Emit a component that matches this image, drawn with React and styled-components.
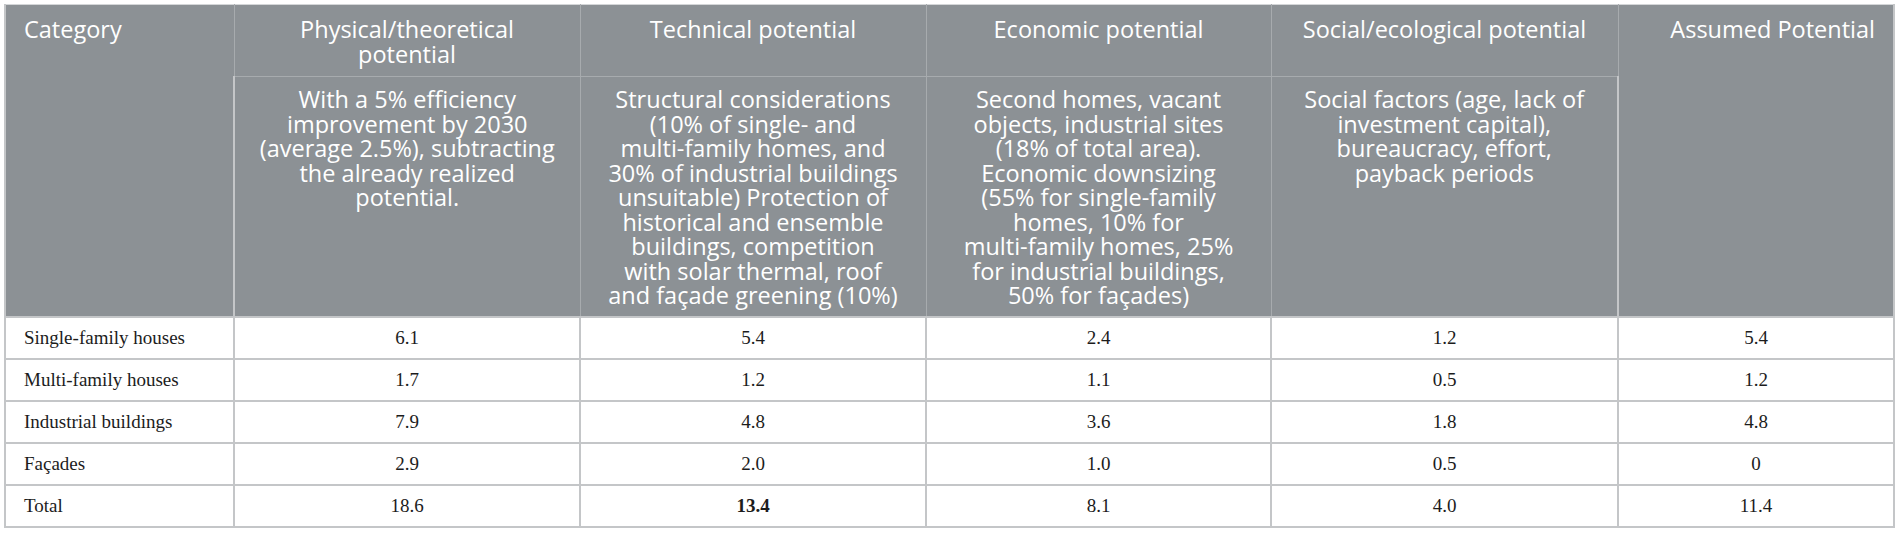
import React from "react";
import styled, { createGlobalStyle } from "styled-components";

const Global = createGlobalStyle`
  html, body { margin: 0; padding: 0; background: #ffffff; }
  body { font-family: "Liberation Serif", serif; }
`;

const Page = styled.div`
  padding: 4px 0 0 4px;
`;

const Table = styled.table`
  width: 1889px;
  table-layout: fixed;
  border-collapse: collapse;
  border-top: 1px solid #d4d6d8;
`;

const HeadCell = styled.th`
  background: #8c9195;
  color: #ffffff;
  font-family: "Open Sans", "Noto Sans", sans-serif;
  font-weight: 400;
  font-size: 23.5px;
  line-height: 24.5px;
  vertical-align: top;
  text-align: ${(p) => p.$align || "center"};
  padding: ${(p) => (p.$sub ? "10px 10px 8px" : "12px 18px 10px")};
  border-left: 1px solid #a7abae;
  border-right: 1px solid #a7abae;
  border-top: ${(p) => (p.$sub ? "1px solid #a7abae" : "none")};
  white-space: pre;
  &:first-child { border-left: 2px solid #c4c6c8; }
  &:last-child { border-right: 2px solid #c4c6c8; }
`;

const BodyCell = styled.td`
  height: 40px;
  padding: 0 18px;
  font-family: "Liberation Serif", "Times New Roman", serif;
  font-size: 19px;
  color: #1c1c1c;
  font-weight: ${(p) => (p.$bold ? 700 : 400)};
  text-align: ${(p) => (p.$left ? "left" : "center")};
  vertical-align: middle;
  border: 2px solid #c4c6c8;
  white-space: nowrap;
`;

const BodyRow = styled.tr``;

const columns = [229, 346, 346, 345, 347, 276];

const topHeads = [
  ["Physical/theoretical", "potential"],
  ["Technical potential"],
  ["Economic potential"],
  ["Social/ecological potential"],
];

const subHeads = [
  [
    "With a 5% efficiency",
    "improvement by 2030",
    "(average 2.5%), subtracting",
    "the already realized",
    "potential.",
  ],
  [
    "Structural considerations",
    "(10% of single- and",
    "multi-family homes, and",
    "30% of industrial buildings",
    "unsuitable) Protection of",
    "historical and ensemble",
    "buildings, competition",
    "with solar thermal, roof",
    "and façade greening (10%)",
  ],
  [
    "Second homes, vacant",
    "objects, industrial sites",
    "(18% of total area).",
    "Economic downsizing",
    "(55% for single-family",
    "homes, 10% for",
    "multi-family homes, 25%",
    "for industrial buildings,",
    "50% for façades)",
  ],
  [
    "Social factors (age, lack of",
    "investment capital),",
    "bureaucracy, effort,",
    "payback periods",
  ],
];

const rows = [
  { name: "Single-family houses", values: ["6.1", "5.4", "2.4", "1.2", "5.4"] },
  { name: "Multi-family houses", values: ["1.7", "1.2", "1.1", "0.5", "1.2"] },
  { name: "Industrial buildings", values: ["7.9", "4.8", "3.6", "1.8", "4.8"] },
  { name: "Façades", values: ["2.9", "2.0", "1.0", "0.5", "0"] },
  { name: "Total", values: ["18.6", "13.4", "8.1", "4.0", "11.4"], boldIndex: 1 },
];

export default function App() {
  return (
    <>
      <Global />
      <Page>
        <Table>
          <colgroup>
            {columns.map((w, i) => (
              <col key={i} style={{ width: w }} />
            ))}
          </colgroup>
          <thead>
            <tr>
              <HeadCell rowSpan={2} $align="left">
                Category
              </HeadCell>
              {topHeads.map((h, i) => (
                <HeadCell key={i}>{h.join("\n")}</HeadCell>
              ))}
              <HeadCell rowSpan={2} $align="right">
                Assumed Potential
              </HeadCell>
            </tr>
            <tr>
              {subHeads.map((h, i) => (
                <HeadCell key={i} $sub>
                  {h.join("\n")}
                </HeadCell>
              ))}
            </tr>
          </thead>
          <tbody>
            {rows.map((r) => (
              <BodyRow key={r.name}>
                <BodyCell $left>{r.name}</BodyCell>
                {r.values.map((v, i) => (
                  <BodyCell key={i} $bold={r.boldIndex === i}>
                    {v}
                  </BodyCell>
                ))}
              </BodyRow>
            ))}
          </tbody>
        </Table>
      </Page>
    </>
  );
}
